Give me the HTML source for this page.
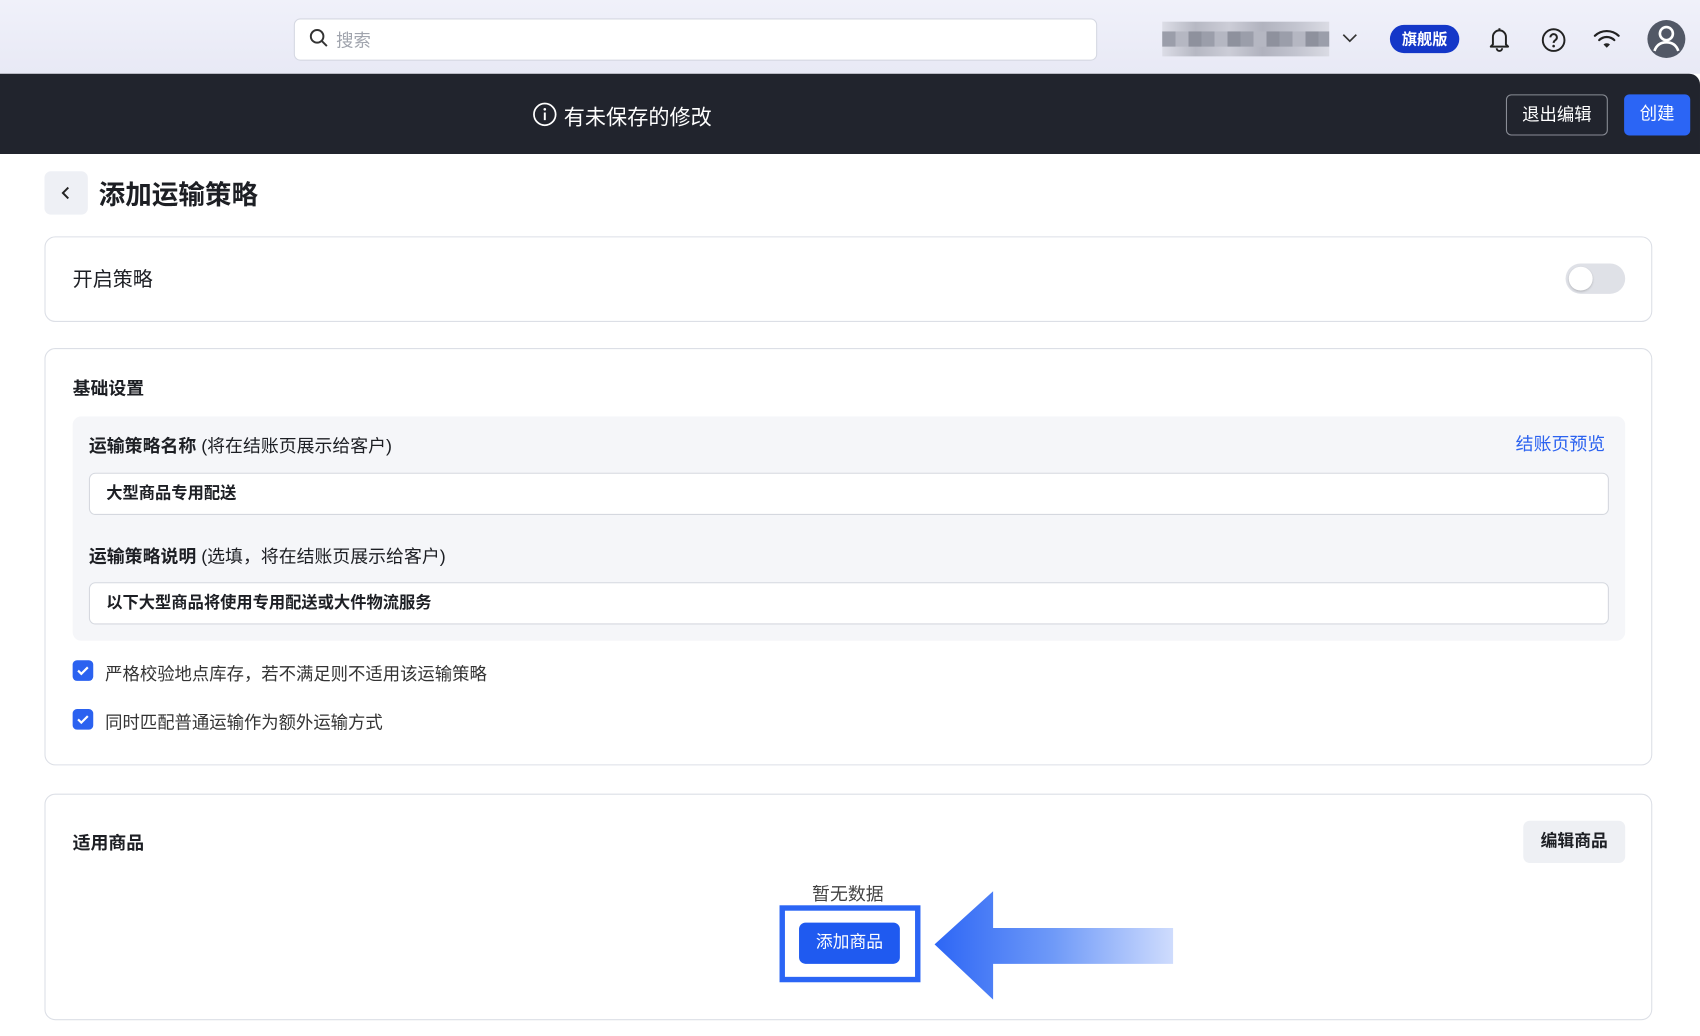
<!DOCTYPE html>
<html><head><meta charset="utf-8"><style>
*{box-sizing:border-box;margin:0;padding:0}
html,body{width:1700px;height:1036px;overflow:hidden;background:#fff}
body{font-family:"Liberation Sans","Noto Sans CJK SC",sans-serif;color:#1d1f24}
#w{position:absolute;left:0;top:0;width:1568px;height:956px;transform:scale(1.08418);transform-origin:0 0;background:#fff}
.a{position:absolute}
.card{position:absolute;left:41px;width:1483px;border:1px solid #dcdfe6;border-radius:10px;background:#fff}
.inp{position:absolute;left:82px;width:1402px;height:39px;background:#fff;border:1px solid #d5d8df;border-radius:6px;font-size:15px;font-weight:bold;padding-left:15px;line-height:37px;color:#1d1f24}
.lbl{position:absolute;left:82px;font-size:16px;color:#1d1f24}
.lbl b{font-weight:bold}
.cb{position:absolute;left:67px;width:19px;height:19px;background:#2b62f0;border-radius:4px}
.cbt{position:absolute;left:97px;font-size:16px;color:#333}
</style></head><body><div id="w">
<div class="a" style="left:0;top:0;width:1568px;height:68px;background:linear-gradient(#f0f1fa,#e8e9f5)"></div>
<div class="a" style="left:271px;top:17px;width:741px;height:39px;background:#fff;border:1px solid #d5d8e2;border-radius:6px"></div>
<svg class="a" style="left:285px;top:26px" width="18" height="18" viewBox="0 0 18 18"><circle cx="7.5" cy="7.5" r="5.8" fill="none" stroke="#333" stroke-width="1.8"/><path d="M12 12l4.5 4.5" stroke="#333" stroke-width="1.8"/></svg>
<div class="a" style="left:310px;top:24px;font-size:16px;color:#a0a4ad">搜索</div>
<div class="a" style="left:1072px;top:20px;width:154px;height:32px;background:linear-gradient(90deg,#d8d9e2,#a9abb6 20%,#c4c5cf 40%,#a2a4b0 60%,#b8bac5 80%,#d6d7df);opacity:.8"></div>
<div class="a" style="left:1072px;top:29px;width:154px;height:14px;background:repeating-linear-gradient(90deg,#9b9eaa 0 12px,#b5b7c2 12px 24px,#8e919d 24px 36px)"></div>
<svg class="a" style="left:1238px;top:30px" width="14" height="10"><path d="M1 2l6 6 6-6" fill="none" stroke="#333" stroke-width="1.6"/></svg>
<div class="a" style="left:1282px;top:23px;width:64px;height:26px;border-radius:13px;background:#1437c8;color:#fff;font-size:14px;text-align:center;line-height:26px;font-weight:bold">旗舰版</div>
<svg class="a" style="left:1372px;top:24px" width="22" height="24" viewBox="0 0 22 24"><path d="M5 17V10a6 6 0 0112 0v7l2 2H3z" fill="none" stroke="#222" stroke-width="1.8" stroke-linejoin="round"/><path d="M8.5 20.5a2.5 2.5 0 005 0" fill="none" stroke="#222" stroke-width="1.8"/><path d="M11 2v2" stroke="#222" stroke-width="1.8"/></svg>
<svg class="a" style="left:1421px;top:25px" width="24" height="24" viewBox="0 0 24 24"><circle cx="12" cy="12" r="10" fill="none" stroke="#222" stroke-width="1.8"/><path d="M9 9.5a3 3 0 115 2.2c-1.3.8-2 1.3-2 2.8" fill="none" stroke="#222" stroke-width="1.8"/><circle cx="12" cy="17.5" r="1.2" fill="#222"/></svg>
<svg class="a" style="left:1469px;top:26px" width="26" height="20" viewBox="0 0 26 20"><path d="M2 7a16 16 0 0122 0M6 11a10 10 0 0114 0" fill="none" stroke="#222" stroke-width="2" stroke-linecap="round"/><path d="M10 15l3 3 3-3a4.5 4.5 0 00-6 0z" fill="#222"/></svg>
<svg class="a" style="left:1519px;top:18px" width="36" height="36" viewBox="0 0 36 36"><circle cx="18" cy="18" r="17.5" fill="#525866"/><circle cx="18" cy="13" r="6" fill="none" stroke="#fff" stroke-width="2.4"/><path d="M7 29c2-6 6-8 11-8s9 2 11 8" fill="none" stroke="#fff" stroke-width="2.4"/></svg>

<div class="a" style="left:0;top:68px;width:1568px;height:74px;background:#21242d;border-top-right-radius:10px"></div>
<svg class="a" style="left:491px;top:94px" width="23" height="23" viewBox="0 0 23 23"><circle cx="11.5" cy="11.5" r="10" fill="none" stroke="#fff" stroke-width="1.6"/><circle cx="11.5" cy="6.8" r="1.2" fill="#fff"/><path d="M11.5 9.8v7" stroke="#fff" stroke-width="1.8"/></svg>
<div class="a" style="left:520px;top:92px;font-size:19.5px;color:#fff">有未保存的修改</div>
<div class="a" style="left:1389px;top:87px;width:94px;height:38px;border:1px solid #8a8d96;border-radius:5px;color:#fff;font-size:16px;text-align:center;line-height:38px">退出编辑</div>
<div class="a" style="left:1498px;top:87px;width:61px;height:38px;background:#2b65f5;border-radius:5px;color:#fff;font-size:16px;text-align:center;line-height:38px">创建</div>

<div class="a" style="left:41px;top:158px;width:40px;height:40px;background:#eef0f5;border-radius:6px"></div>
<svg class="a" style="left:55px;top:171px" width="12" height="14"><path d="M8 2L3 7l5 5" fill="none" stroke="#222" stroke-width="1.8"/></svg>
<div class="a" style="left:91px;top:161px;font-size:24.5px;font-weight:bold">添加运输策略</div>

<div class="card" style="top:218px;height:79px"></div>
<div class="a" style="left:67px;top:244px;font-size:18.5px">开启策略</div>
<div class="a" style="left:1444px;top:243px;width:55px;height:28px;border-radius:14px;background:#dfe1e7"></div>
<div class="a" style="left:1447px;top:246px;width:22px;height:22px;border-radius:11px;background:#fff;box-shadow:0 1px 2px rgba(0,0,0,.2)"></div>

<div class="card" style="top:321px;height:385px"></div>
<div class="a" style="left:67px;top:345px;font-size:16.5px;font-weight:bold">基础设置</div>
<div class="a" style="left:67px;top:384px;width:1432px;height:207px;background:#f5f6f9;border-radius:8px"></div>
<div class="lbl" style="top:398px;font-size:16.5px"><b>运输策略名称</b> (将在结账页展示给客户)</div>
<div class="a" style="left:1398px;top:396px;font-size:16.5px;color:#2b62f0">结账页预览</div>
<div class="inp" style="top:436px">大型商品专用配送</div>
<div class="lbl" style="top:500px;font-size:16.5px"><b>运输策略说明</b> (选填，将在结账页展示给客户)</div>
<div class="inp" style="top:537px">以下大型商品将使用专用配送或大件物流服务</div>
<div class="cb" style="top:609px"></div><svg class="a" style="left:67px;top:609px" width="19" height="19"><path d="M5 9.5l3 3 6-6" fill="none" stroke="#fff" stroke-width="2"/></svg>
<div class="cbt" style="top:608px">严格校验地点库存，若不满足则不适用该运输策略</div>
<div class="cb" style="top:654px"></div><svg class="a" style="left:67px;top:654px" width="19" height="19"><path d="M5 9.5l3 3 6-6" fill="none" stroke="#fff" stroke-width="2"/></svg>
<div class="cbt" style="top:653px">同时匹配普通运输作为额外运输方式</div>

<div class="card" style="top:732px;height:209px"></div>
<div class="a" style="left:67px;top:764px;font-size:16.5px;font-weight:bold">适用商品</div>
<div class="a" style="left:1405px;top:757px;width:94px;height:39px;background:#eef0f4;border-radius:6px;font-size:15.5px;font-weight:bold;text-align:center;line-height:39px">编辑商品</div>
<div class="a" style="left:749px;top:811px;font-size:16.5px;color:#444">暂无数据</div>
<div class="a" style="left:719px;top:835px;width:130px;height:71px;border:5px solid #2b65f5"></div>
<div class="a" style="left:737px;top:851px;width:93px;height:38px;background:#1f5af0;border-radius:6px;color:#fff;font-size:15.5px;text-align:center;line-height:38px">添加商品</div>
<svg class="a" style="left:860px;top:820px" width="224" height="104" viewBox="0 0 224 104"><defs><linearGradient id="g" x1="0" x2="1"><stop offset="0" stop-color="#2d66f5"/><stop offset=".5" stop-color="#6f9af8"/><stop offset="1" stop-color="#cfdcfd"/></linearGradient></defs><path d="M2 51L56 2V36H222V69H56V102Z" fill="url(#g)"/></svg>
</div></body></html>
